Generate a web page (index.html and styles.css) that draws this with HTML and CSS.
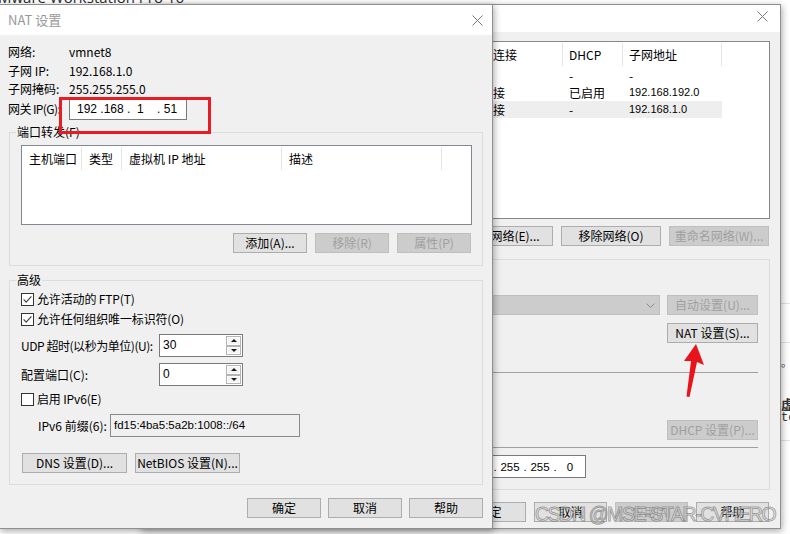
FILE: index.html
```html
<!DOCTYPE html>
<html lang="zh-CN">
<head>
<meta charset="utf-8">
<title>NAT 设置</title>
<link rel="stylesheet" href="styles.css">
</head>
<body>
<div class="desk">
  <div class="apptitle"><span>VMware Workstation Pro 16</span></div>

  <aside class="behind">
    <span class="rule r1"></span>
    <span class="rule r2"></span>
    <span class="bt b1">。</span>
    <span class="bt b2">虚</span>
    <span class="bt b3">tc</span>
    <span class="rule r3"></span>
  </aside>

  <section class="win editor">
    <header class="tbar tbar-ed">
      <span class="ttl">虚拟网络编辑器</span>
      <svg class="x" width="11" height="11" viewBox="0 0 11 11"><path d="M0.5 0.5L10.5 10.5M10.5 0.5L0.5 10.5" stroke="#7a7a7a" stroke-width="1"/></svg>
    </header>
    <div class="ed-body">
      <div class="lv ed-list">
        <div class="ed-row ed-head"><span>名称</span><span>类型</span><span>外部连接</span><span>主机连接</span><span>DHCP</span><span>子网地址</span></div>
        <div class="ed-row"><span>VMnet0</span><span>桥接模式</span><span>自动桥接</span><span>-</span><span>-</span><span>-</span></div>
        <div class="ed-row"><span>VMnet1</span><span>仅主机模式</span><span>-</span><span>已连接</span><span>已启用</span><span class="num">192.168.192.0</span></div>
        <div class="ed-row sel"><span>VMnet8</span><span>NAT 模式</span><span>NAT 模式</span><span>已连接</span><span>-</span><span class="num">192.168.1.0</span></div>
      </div>
      <div class="btnrow ed-netbtns">
        <button class="btn">添加网络(E)...</button>
        <button class="btn">移除网络(O)</button>
        <button class="btn" disabled>重命名网络(W)...</button>
      </div>
      <div class="group ed-group">
        <div class="ghead"><span>VMnet 信息</span></div>
        <div class="ed-gbody">
          <div class="r-bridge">
            <span class="hidlbl">已桥接至(G):</span>
            <span class="select"><svg width="9" height="5" viewBox="0 0 9 5"><path d="M0.5 0.5L4.5 4.5L8.5 0.5" fill="none" stroke="#8a8a8a"/></svg></span>
            <button class="btn w91" disabled>自动设置(U)...</button>
          </div>
          <div class="r-nat"><button class="btn w91">NAT 设置(S)...</button></div>
          <div class="sep sep1"></div>
          <div class="r-dhcp"><button class="btn w91" disabled>DHCP 设置(P)...</button></div>
          <div class="sep sep2"></div>
          <div class="r-ip">
            <span class="ipbox ipbox-ed"><span class="oc">255</span><span class="dt">.</span><span class="oc">255</span><span class="dt">.</span><span class="oc">255</span><span class="dt">.</span><span class="oc">0</span></span>
          </div>
        </div>
      </div>
      <div class="btnrow ed-foot">
        <button class="btn">确定</button>
        <button class="btn">取消</button>
        <button class="btn" disabled>应用(A)</button>
        <button class="btn">帮助</button>
      </div>
    </div>
  </section>

  <section class="win nat">
    <header class="tbar tbar-nat">
      <span class="ttl">NAT 设置</span>
      <svg class="x" width="11" height="11" viewBox="0 0 11 11"><path d="M0.5 0.5L10.5 10.5M10.5 0.5L0.5 10.5" stroke="#7a7a7a" stroke-width="1"/></svg>
    </header>
    <div class="nat-body">
      <div class="info">
        <span>网络:</span><span>vmnet8</span>
        <span>子网 IP:</span><span>192.168.1.0</span>
        <span>子网掩码:</span><span>255.255.255.0</span>
        <span class="gwlabel">网关 IP(G):</span>
        <span class="ipbox ipbox-gw">192 .168 .  1    . 51</span>
      </div>

      <div class="group g-port">
        <div class="ghead"><span>端口转发(F)</span></div>
        <div class="pf-body">
          <div class="lv pf-list">
            <div class="pf-head"><span>主机端口</span><span>类型</span><span>虚拟机 IP 地址</span><span>描述</span></div>
          </div>
          <div class="btnrow pf-btns">
            <button class="btn">添加(A)...</button>
            <button class="btn" disabled>移除(R)</button>
            <button class="btn" disabled>属性(P)</button>
          </div>
        </div>
      </div>

      <div class="group g-adv">
        <div class="ghead"><span>高级</span></div>
        <div class="adv">
          <label class="cb"><svg width="13" height="13" viewBox="0 0 13 13"><rect x="0.5" y="0.5" width="12" height="12" fill="#fff" stroke="#333"/><path d="M2.6 6.4L5.2 9.1L10.4 3.4" fill="none" stroke="#444" stroke-width="1.2"/></svg><span>允许活动的 FTP(T)</span></label>
          <label class="cb"><svg width="13" height="13" viewBox="0 0 13 13"><rect x="0.5" y="0.5" width="12" height="12" fill="#fff" stroke="#333"/><path d="M2.6 6.4L5.2 9.1L10.4 3.4" fill="none" stroke="#444" stroke-width="1.2"/></svg><span>允许任何组织唯一标识符(O)</span></label>
          <div class="field f-udp">
            <span class="flabel tight">UDP 超时(以秒为单位)(U):</span>
            <span class="spin"><span class="val">30</span><span class="sbtns"><span class="sb up"></span><span class="sb dn"></span></span></span>
          </div>
          <div class="field f-port">
            <span class="flabel">配置端口(C):</span>
            <span class="spin"><span class="val">0</span><span class="sbtns"><span class="sb up"></span><span class="sb dn"></span></span></span>
          </div>
          <label class="cb f-v6"><svg width="13" height="13" viewBox="0 0 13 13"><rect x="0.5" y="0.5" width="12" height="12" fill="#fff" stroke="#333"/></svg><span>启用 IPv6(E)</span></label>
          <div class="field f-prefix">
            <span class="plabel">IPv6 前缀(6):</span>
            <span class="textbox">fd15:4ba5:5a2b:1008::/64</span>
          </div>
          <div class="btnrow dns-row">
            <button class="btn">DNS 设置(D)...</button>
            <button class="btn">NetBIOS 设置(N)...</button>
          </div>
        </div>
      </div>

      <div class="btnrow nat-foot">
        <button class="btn">确定</button>
        <button class="btn">取消</button>
        <button class="btn">帮助</button>
      </div>
    </div>
  </section>

  <div class="hl"></div>
  <svg class="arrow" width="790" height="534" viewBox="0 0 790 534"><polygon points="696,344 704,365 697,362 689.5,397 686.5,396.5 691,361 684,361" fill="#e8141c"/></svg>
  <div class="wm">CSDN @MSE-STAR-CVHERO</div>
</div>
</body>
</html>
```

FILE: styles.css
```css
* { box-sizing: border-box; }
html, body { margin: 0; padding: 0; }
body {
  background: #fff;
  font-family: "Noto Sans CJK SC", "Microsoft YaHei", sans-serif;
  font-size: 12px;
  color: #000;
}
.desk {
  position: relative;
  width: 790px;
  height: 534px;
  overflow: hidden;
  background: #fff;
}
.apptitle { height: 4px; overflow: hidden; }
.apptitle span {
  display: block;
  margin: -12px 0 0 -11px;
  font-family: "Open Sans", "Noto Sans", sans-serif;
  font-size: 15px;
  line-height: 18px;
  color: #2a2a2a;
  white-space: nowrap;
}

/* strip of the main window visible at the right */
.behind {
  position: absolute;
  left: 781px;
  top: 0;
  width: 20px;
  height: 534px;
  background: #fff;
  display: flex;
  flex-direction: column;
}
.rule { display: block; height: 1px; background: #e3e3e3; }
.r1 { margin-top: 303px; }
.r2 { margin-top: 38px; }
.bt { display: block; line-height: 14px; color: #333; }
.b1 { margin-top: 12px; font-size: 11px; }
.b2 { margin-top: 28px; font-size: 13px; font-weight: 700; }
.b3 { font-family: "Liberation Mono", monospace; font-size: 12px; }
.r3 { margin-top: 15px; }

/* windows */
.win {
  position: absolute;
  top: 4px;
  height: 525px;
  background: #f0f0f0;
  border: 1px solid #8f8f8f;
  display: flex;
  flex-direction: column;
  box-shadow: 1px 2px 7px rgba(0, 0, 0, 0.35);
}
.editor { left: 140px; width: 641px; }
.nat { left: -1px; width: 494px; }

.tbar {
  flex: none;
  background: #fff;
  display: flex;
  justify-content: space-between;
}
.tbar-nat { height: 30px; align-items: center; padding: 0 9px 0 8px; }
.tbar-ed { height: 27px; align-items: flex-start; padding: 6px 12px 0 10px; }
.ttl { font-size: 13px; line-height: 16px; color: #999; }
.tbar-ed .ttl { color: #000; line-height: 14px; }
.x { flex: none; display: block; }

/* common controls */
.btnrow { display: flex; justify-content: flex-end; gap: 8px; }
.btn {
  font: inherit;
  height: 20px;
  padding: 0;
  margin: 0;
  background: #e1e1e1;
  border: 1px solid #adadad;
  border-radius: 0;
  color: #000;
  line-height: 18px;
  white-space: nowrap;
  text-align: center;
}
.btn:disabled { background: #cccccc; border-color: #bfbfbf; color: #a0a0a0; }
.lv { background: #fff; border: 1px solid #828790; }

.group { border: 1px solid #dcdcdc; border-top: 0; }
.ghead {
  height: 14px;
  margin: 0 -1px;
  display: flex;
  line-height: 14px;
  background: linear-gradient(#f0f0f0 0 7px, #dcdcdc 7px 8px, transparent 8px);
}
.ghead span { margin-left: 7px; padding: 0 1px; background: #f0f0f0; }

.ipbox {
  display: flex;
  align-items: center;
  height: 23px;
  background: #fff;
  border: 1px solid #7a7a7a;
}

/* NAT dialog */
.nat-body { padding: 7px 9px 0 8px; display: flex; flex-direction: column; }
.info {
  display: grid;
  grid-template-columns: 61px auto;
  grid-template-rows: 19px 19px 17px 23px;
  align-items: center;
  line-height: 16px;
}
.gwlabel { letter-spacing: -0.6px; white-space: nowrap; }
.ipbox-gw {
  width: 118px;
  padding-left: 7px;
  font-family: "Liberation Sans", sans-serif;
  font-size: 12px;
  white-space: pre;
}

.g-port { margin: 5px 0 0 1px; }
.pf-body { padding: 6px 10px 12px 11px; }
.pf-list { height: 80px; }
.pf-head { display: grid; grid-template-columns: 60px 40px 160px 160px; height: 25px; }
.pf-head span { margin: 1px 0; line-height: 23px; padding-left: 7px; border-right: 1px solid #e5e5e5; white-space: nowrap; }
.pf-btns { margin: 8px 1px 0 0; }
.pf-btns .btn { width: 74px; }

.g-adv { margin: 7px 0 0 1px; }
.adv { padding: 2px 10px 11px 11px; display: flex; flex-direction: column; align-items: flex-start; }
.cb { display: flex; align-items: center; height: 20px; gap: 3px; line-height: 16px; letter-spacing: -0.15px; }
.cb svg { flex: none; display: block; }
.field { display: flex; align-items: center; height: 23px; line-height: 16px; }
.f-udp { margin-top: 5px; }
.f-port { margin-top: 6px; }
.f-v6 { margin-top: 3px; }
.f-prefix { margin-top: 5px; padding-left: 17px; }
.flabel { width: 138px; white-space: nowrap; }
.tight { letter-spacing: -0.45px; }
.plabel { width: 72px; white-space: nowrap; }
.spin {
  width: 84px;
  height: 23px;
  border: 1px solid #7a7a7a;
  background: #fff;
  display: flex;
}
.val { flex: 1; padding: 3px 0 0 3px; font-family: "Liberation Sans", sans-serif; font-size: 12px; line-height: 14px; }
.sbtns { flex: none; width: 16px; display: flex; flex-direction: column; padding: 1px 1px 1px 0; }
.sb {
  flex: 1;
  border: 1px solid #b4b4b4;
  background: #f4f4f4;
  box-shadow: inset 0 0 0 1px #fff;
  display: flex;
  align-items: center;
  justify-content: center;
}
.sb::before { content: ""; width: 0; height: 0; border-left: 3px solid transparent; border-right: 3px solid transparent; }
.sb.up::before { border-bottom: 3px solid #1a1a1a; }
.sb.dn::before { border-top: 3px solid #1a1a1a; }
.textbox {
  width: 190px;
  height: 23px;
  border: 1px solid #8a8a8a;
  background: #f0f0f0;
  padding-left: 3px;
  font-family: "Liberation Sans", sans-serif;
  font-size: 11.5px;
  line-height: 20px;
  white-space: nowrap;
}
.dns-row { margin: 16px 0 0 1px; justify-content: flex-start; }
.dns-row .btn { width: 105px; }
.nat-foot { margin-top: 13px; gap: 7px; }
.nat-foot .btn { width: 74px; }

/* editor (behind) */
.ed-body { padding: 9px 10px 0 10px; display: flex; flex-direction: column; }
.ed-list { height: 178px; }
.ed-row {
  display: grid;
  grid-template-columns: 80px 110px 121px 100px 60px 99px;
  width: 570px;
  height: 17px;
  line-height: 17px;
}
.ed-row span { padding-left: 6px; white-space: nowrap; overflow: hidden; }
.ed-head { height: 25px; }
.ed-head span { margin: 1px 0; line-height: 23px; border-right: 1px solid #e5e5e5; }
.ed-row .num { font-family: "Liberation Sans", sans-serif; font-size: 11px; }
.sel { background: #eeeeee; }
.ed-netbtns { margin: 7px 1px 0 0; }
.ed-netbtns .btn { width: 100px; }
.ed-group { margin-top: 6px; }
.ed-gbody { padding: 29px 11px 11px 10px; display: flex; flex-direction: column; }
.r-bridge { display: flex; align-items: center; height: 20px; gap: 7px; }
.hidlbl { width: 90px; white-space: nowrap; }
.select {
  flex: 1;
  height: 20px;
  background: #cccccc;
  border: 1px solid #bfbfbf;
  display: flex;
  align-items: center;
  justify-content: flex-end;
  padding-right: 4px;
}
.select svg { display: block; }
.w91 { width: 91px; }
.r-nat, .r-dhcp { display: flex; justify-content: flex-end; }
.r-nat { margin-top: 8px; }
.sep { height: 1px; background: #a0a0a0; }
.sep1 { margin-top: 29px; }
.r-dhcp { margin-top: 47px; }
.sep2 { margin-top: 7px; }
.r-ip { margin-top: 7px; display: flex; justify-content: flex-end; padding-right: 172px; }
.ipbox-ed { width: 124px; padding-left: 4px; font-family: "Liberation Sans", sans-serif; font-size: 11.5px; }
.oc { width: 26px; text-align: center; }
.dt { width: 4px; text-align: center; }
.ed-foot { margin: 12px 1px 0 0; }
.ed-foot .btn { width: 73px; }

/* annotations */
.hl {
  position: absolute;
  left: 59px;
  top: 97px;
  width: 152px;
  height: 37px;
  border: 3px solid #e81c24;
}
.arrow { position: absolute; left: 0; top: 0; pointer-events: none; }
.wm {
  position: absolute;
  left: 535px;
  top: 502px;
  font-family: "Liberation Sans", sans-serif;
  font-size: 19.5px;
  line-height: 24px;
  letter-spacing: -1.4px;
  color: rgba(255, 255, 255, 0.55);
  -webkit-text-stroke: 1px rgba(105, 105, 105, 0.6);
  white-space: nowrap;
}
```
